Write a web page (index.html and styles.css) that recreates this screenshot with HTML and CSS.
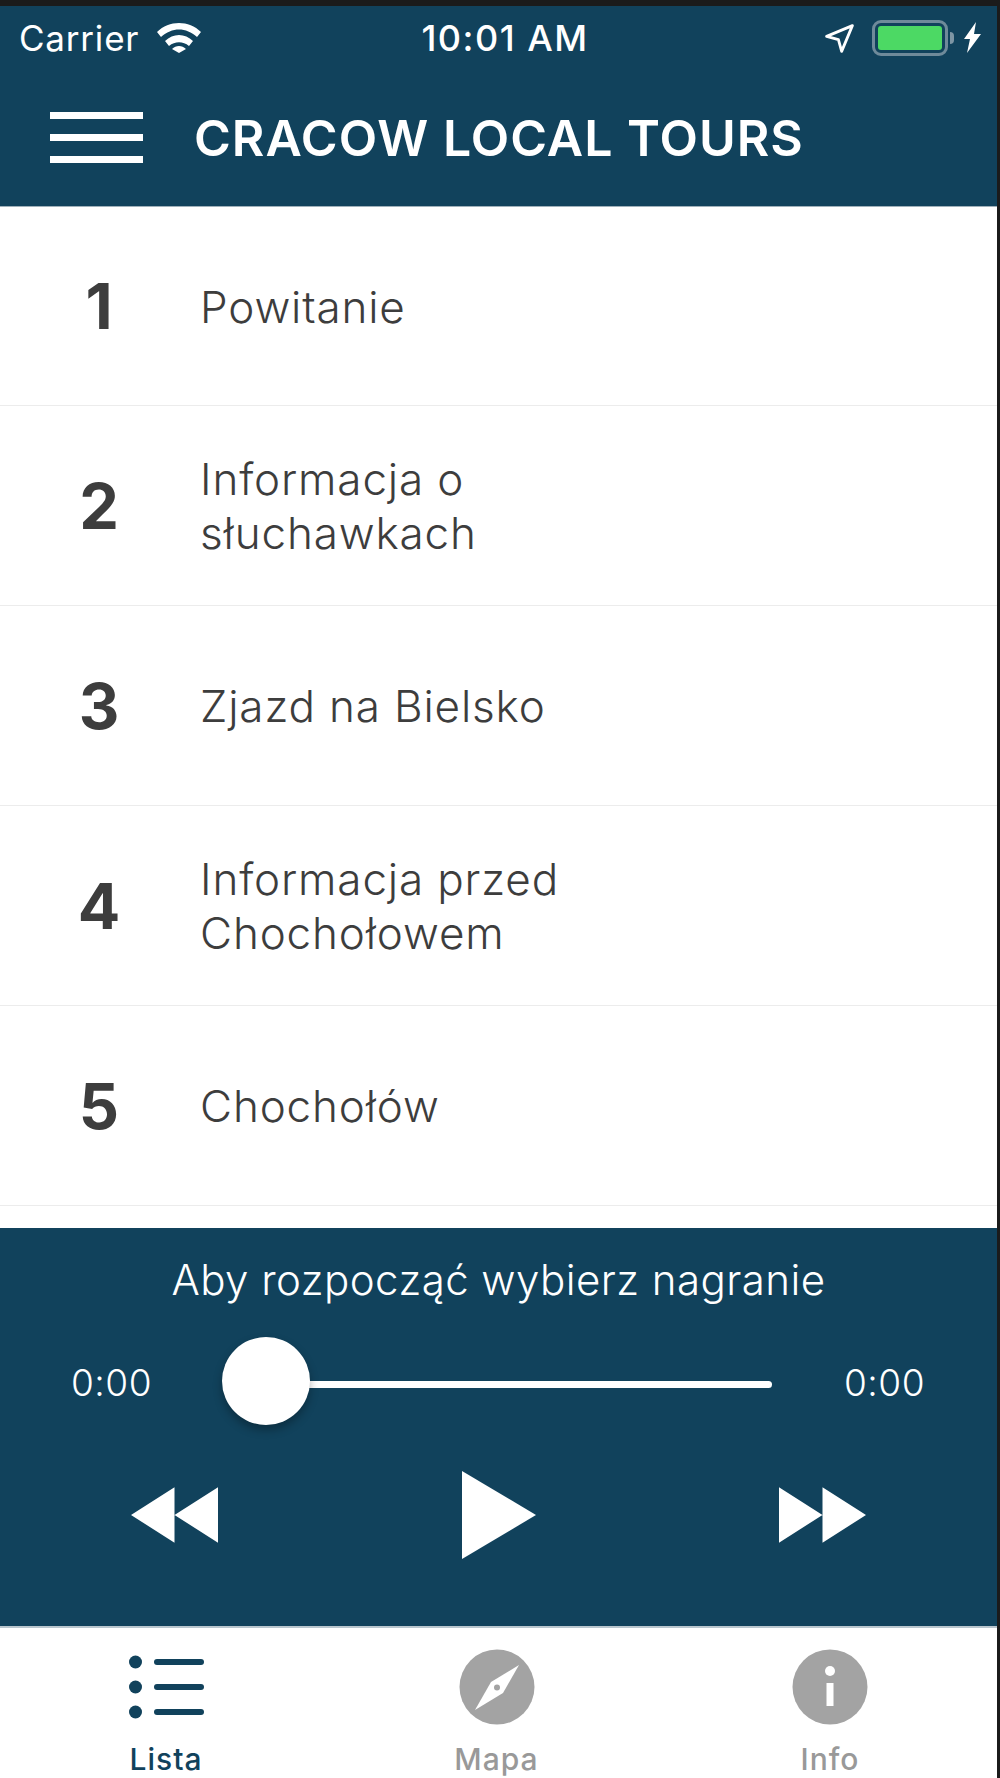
FILE: index.html
```html
<!DOCTYPE html>
<html lang="pl">
<head>
<meta charset="utf-8">
<title>Cracow Local Tours</title>
<link rel="stylesheet" href="styles.css">
</head>
<body>
<div class="phone">
  <header class="header">
    <div class="status">
      <div class="status-left">
        <span class="carrier">Carrier</span>
        <svg class="wifi" viewBox="0 0 44 32" width="44" height="32"><path d="M0 11C12-1 32-1 44 11l-4 5C29 6 15 6 4 16zM8 20c8-8 20-8 28 0l-4 5c-6-5-14-5-20 0zM15 28c4-4 10-4 14 0l-7 4z" fill="#fff" transform="translate(0 -1)"/></svg>
      </div>
      <span class="clock">10:01 AM</span>
      <div class="status-right">
        <svg class="arrow" viewBox="1.500 1.500 27 27" width="29" height="29"><path d="M27 3 3 13l11 3 3 11z" fill="none" stroke="#fff" stroke-width="2.600" stroke-linejoin="round"/></svg>
        <div class="battery"><div class="battery-fill"></div></div>
        <span class="battery-cap"></span>
        <svg class="bolt" viewBox="0 0 18 32" width="18" height="32"><path d="M12 0 0 17h6L3 31 17 12h-7z" fill="#fff"/></svg>
      </div>
    </div>
    <div class="titlebar">
      <div class="burger"><span></span><span></span><span></span></div>
      <h1 class="title">CRACOW LOCAL TOURS</h1>
    </div>
  </header>

  <ul class="list">
    <li class="row"><span class="num">1</span><span class="name">Powitanie</span></li>
    <li class="row"><span class="num">2</span><span class="name">Informacja o<br>słuchawkach</span></li>
    <li class="row"><span class="num">3</span><span class="name">Zjazd na Bielsko</span></li>
    <li class="row"><span class="num">4</span><span class="name">Informacja przed<br>Chochołowem</span></li>
    <li class="row"><span class="num">5</span><span class="name">Chochołów</span></li>
  </ul>

  <section class="player">
    <div class="track">Aby rozpocząć wybierz nagranie</div>
    <div class="progress">
      <span class="time">0:00</span>
      <div class="slider"><span class="knob"></span></div>
      <span class="time">0:00</span>
    </div>
    <div class="controls">
      <svg viewBox="0 0 88 56" width="87" height="56"><path d="M44 0v56L0 28zM88 0v56L44 28z" fill="#fff"/></svg>
      <svg viewBox="0 0 74 88" width="74" height="88"><path d="M0 0l74 44L0 88z" fill="#fff"/></svg>
      <svg viewBox="0 0 88 56" width="87" height="56"><path d="M0 0v56l44-28zM44 0v56l44-28z" fill="#fff"/></svg>
    </div>
  </section>

  <nav class="tabs">
    <div class="tab active">
      <svg viewBox="-1 0 76 76" width="76" height="76"><g fill="#11425c"><circle cx="6.500" cy="13" r="6.500"/><circle cx="6.500" cy="38" r="6.500"/><circle cx="6.500" cy="63" r="6.500"/><rect x="25" y="10" width="50" height="6" rx="3"/><rect x="25" y="35" width="50" height="6" rx="3"/><rect x="25" y="60" width="50" height="6" rx="3"/></g></svg>
      <span class="tab-label">Lista</span>
    </div>
    <div class="tab">
      <svg viewBox="0 0 76 76" width="76" height="76"><circle cx="38" cy="38" r="37.500" fill="#a3a3a3"/><path d="M60 16 44 44 16 61 32 33z" fill="#fff"/><circle cx="38" cy="38.500" r="3" fill="#a3a3a3"/></svg>
      <span class="tab-label">Mapa</span>
    </div>
    <div class="tab">
      <svg viewBox="0 0 76 76" width="76" height="76"><circle cx="38" cy="38" r="37.500" fill="#a3a3a3"/><circle cx="38" cy="22" r="5" fill="#fff"/><rect x="34.500" y="34" width="7" height="23" fill="#fff"/></svg>
      <span class="tab-label">Info</span>
    </div>
  </nav>
</div>
</body>
</html>
```
FILE: styles.css
```css
* { box-sizing: border-box; }
html, body { margin: 0; padding: 0; background: #fff; }
body { font-family: Inter, "Liberation Sans", sans-serif; }
.phone {
  width: 1000px;
  height: 1778px;
  display: flex;
  flex-direction: column;
  border-top: 6px solid #1b1b1b;
  border-right: 3px solid #1b1b1b;
  overflow: hidden;
}
.header {
  height: 201px;
  background: #11425c;
  border-bottom: 1px solid #9fb0ba;
  color: #fff;
  flex: none;
}
.status {
  height: 58px;
  padding: 6px 15px 0 19px;
  display: grid;
  grid-template-columns: 1fr auto 1fr;
  align-items: center;
}
.status-left { display: flex; align-items: center; gap: 18px; }
.carrier { font-size: 35px; font-weight: 400; letter-spacing: 0.8px; }
.clock { font-size: 36px; font-weight: 500; letter-spacing: 1.5px; margin-left: 9px; }
.status-right { display: flex; align-items: center; justify-content: flex-end; }
.arrow { margin-right: 18px; }
.battery {
  width: 76px;
  height: 36px;
  border: 3px solid #6f8a9a;
  border-radius: 9px;
  padding: 3px;
}
.battery-fill { width: 100%; height: 100%; background: #4cd964; border-radius: 3px; }
.battery-cap { width: 4px; height: 12px; background: #7d95a4; border-radius: 0 4px 4px 0; margin: 0 10px 0 2px; }
.titlebar { display: flex; align-items: center; padding: 11px 0 0 50px; height: 136px; }
.burger { width: 93px; display: flex; flex-direction: column; gap: 15px; margin-right: 51px; }
.burger span { display: block; height: 7px; background: #fff; }
.title { margin: 0; font-size: 50px; font-weight: 600; letter-spacing: 1px; }
.list { list-style: none; margin: 0; padding: 0; flex: 1; overflow: hidden; }
.row {
  height: 200px;
  border-bottom: 1px solid #ececec;
  display: flex;
  align-items: center;
  color: #3d3d3d;
}
.row:first-child { height: 199px; }
.num { width: 198px; text-align: center; font-size: 63px; font-weight: 700; flex: none; margin-right: 2px; }
.name { font-size: 44px; line-height: 54px; font-weight: 300; letter-spacing: 0.85px; padding-top: 1px; }
.player {
  height: 398px;
  flex: none;
  background: #11425c;
  color: #fff;
  padding-top: 22px;
  display: flex;
  flex-direction: column;
}
.track { text-align: center; font-size: 42px; line-height: 60px; letter-spacing: 0.45px; font-weight: 300; }
.progress { display: flex; align-items: center; justify-content: space-between; padding: 0 73px 0 71px; margin-top: 27px; height: 88px; }
.time { font-size: 37px; width: 80px; font-weight: 300; letter-spacing: 0.5px; padding-top: 2px; }
.slider { position: relative; width: 549px; height: 7px; background: #fff; border-radius: 4px; top: 3px; }
.knob { position: absolute; left: -1px; top: -44px; width: 88px; height: 88px; border-radius: 50%; background: #fff; box-shadow: 0 5px 10px rgba(0,0,0,.3); }
.controls { display: flex; align-items: center; justify-content: space-between; padding: 0 131px; margin-top: 46px; }
.controls svg { display: block; }
.tabs { height: 152px; flex: none; display: grid; grid-template-columns: 332px 329px 338px; border-top: 2px solid #b9c6ce; padding-top: 21px; }
.tab { display: flex; flex-direction: column; align-items: center; color: #999; }
.tab svg { display: block; }
.tab.active { color: #11425c; }
.tab-label { font-size: 30px; line-height: 36px; margin-top: 16px; font-weight: 500; letter-spacing: 1px; }
```
